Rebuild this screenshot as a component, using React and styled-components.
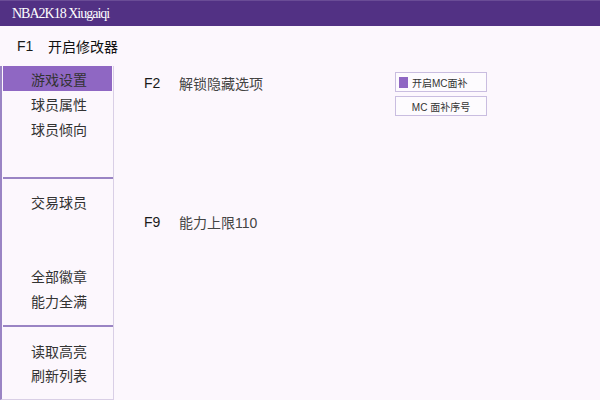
import React from "react";
import styled, { createGlobalStyle } from "styled-components";

const Global = createGlobalStyle`
  html, body { margin: 0; padding: 0; background: #fcf7fd; }
  body { font-family: "Liberation Sans", "Noto Sans CJK SC", sans-serif; }
  #root { width: 600px; height: 400px; overflow: hidden; }
`;

const Window = styled.div`
  width: 600px;
  height: 400px;
  display: flex;
  flex-direction: column;
  background: #fcf7fd;
`;

const TitleBar = styled.div`
  height: 26px;
  flex: none;
  background: #523184;
  border-top: 1px solid #6a4c96;
  box-sizing: border-box;
  color: #fff;
  font-family: "Liberation Serif", "DejaVu Serif", serif;
  font-size: 14px;
  letter-spacing: -1px;
  display: flex;
  align-items: center;
  padding-left: 12px;
`;

const HotRow = styled.div`
  height: 40px;
  flex: none;
  display: flex;
  align-items: center;
  padding-left: 17px;
  font-size: 14px;
  color: #111;
`;

const Key = styled.span`
  display: inline-block;
  width: ${(p) => p.$w || 31}px;
  color: #1a1a1a;
`;

const Body = styled.div`
  flex: 1;
  display: flex;
  min-height: 0;
`;

const Sidebar = styled.div`
  width: 114px;
  flex: none;
  border-left: 2px solid #9a84c4;
  border-right: 1px solid #d9cfe6;
  border-bottom: 1px solid #d9cfe6;
  padding-left: 1px;
  box-sizing: border-box;
  display: flex;
  flex-direction: column;
`;

const Group = styled.div`
  display: flex;
  flex-direction: column;
  height: ${(p) => p.$h}px;
  padding-top: ${(p) => p.$pt || 0}px;
  box-sizing: border-box;
  flex: none;
`;

const Item = styled.div`
  height: 25px;
  width: 109px;
  display: flex;
  align-items: center;
  padding-left: 28px;
  box-sizing: border-box;
  font-size: 14px;
  color: #333;
  margin-top: ${(p) => p.$mt || 0}px;
  background: ${(p) => (p.$active ? "#8f67c3" : "transparent")};
`;

const Separator = styled.div`
  height: 2px;
  width: 110px;
  background: #9a84c4;
  flex: none;
`;

const Main = styled.div`
  flex: 1;
  display: flex;
  padding-left: 30px;
  padding-top: 7px;
`;

const Options = styled.div`
  display: flex;
  flex-direction: column;
  width: 250px;
`;

const Option = styled.div`
  height: 20px;
  display: flex;
  align-items: center;
  font-size: 14px;
  color: #444;
  margin-top: ${(p) => p.$mt || 0}px;
`;

const Buttons = styled.div`
  display: flex;
  flex-direction: column;
  gap: 4px;
  margin-top: -1px;
  margin-left: 1px;
`;

const Btn = styled.div`
  width: 92px;
  height: 20px;
  box-sizing: border-box;
  border: 1px solid #c9bde0;
  background: #fdfbfe;
  display: flex;
  align-items: center;
  justify-content: ${(p) => (p.$center ? "center" : "flex-start")};
  padding-left: ${(p) => (p.$center ? 0 : 3)}px;
  gap: 4px;
  font-size: 10px;
  color: #333;
`;

const Check = styled.span`
  width: 9px;
  height: 11px;
  background: #8f67c3;
  display: inline-block;
`;

export default function App() {
  return (
    <Window>
      <Global />
      <TitleBar>NBA2K18 Xiugaiqi</TitleBar>
      <HotRow>
        <Key>F1</Key>开启修改器
      </HotRow>
      <Body>
        <Sidebar>
          <Group $h={111}>
            <Item $active>游戏设置</Item>
            <Item>球员属性</Item>
            <Item>球员倾向</Item>
          </Group>
          <Separator />
          <Group $h={146} $pt={10}>
            <Item>交易球员</Item>
            <Item $mt={49}>全部徽章</Item>
            <Item>能力全满</Item>
          </Group>
          <Separator />
          <Group $h={60} $pt={12}>
            <Item>读取高亮</Item>
            <Item>刷新列表</Item>
          </Group>
        </Sidebar>
        <Main>
          <Options>
            <Option>
              <Key $w={35}>F2</Key>解锁隐藏选项
            </Option>
            <Option $mt={119}>
              <Key $w={35}>F9</Key>能力上限110
            </Option>
          </Options>
          <Buttons>
            <Btn>
              <Check />
              开启MC面补
            </Btn>
            <Btn $center>MC 面补序号</Btn>
          </Buttons>
        </Main>
      </Body>
    </Window>
  );
}
